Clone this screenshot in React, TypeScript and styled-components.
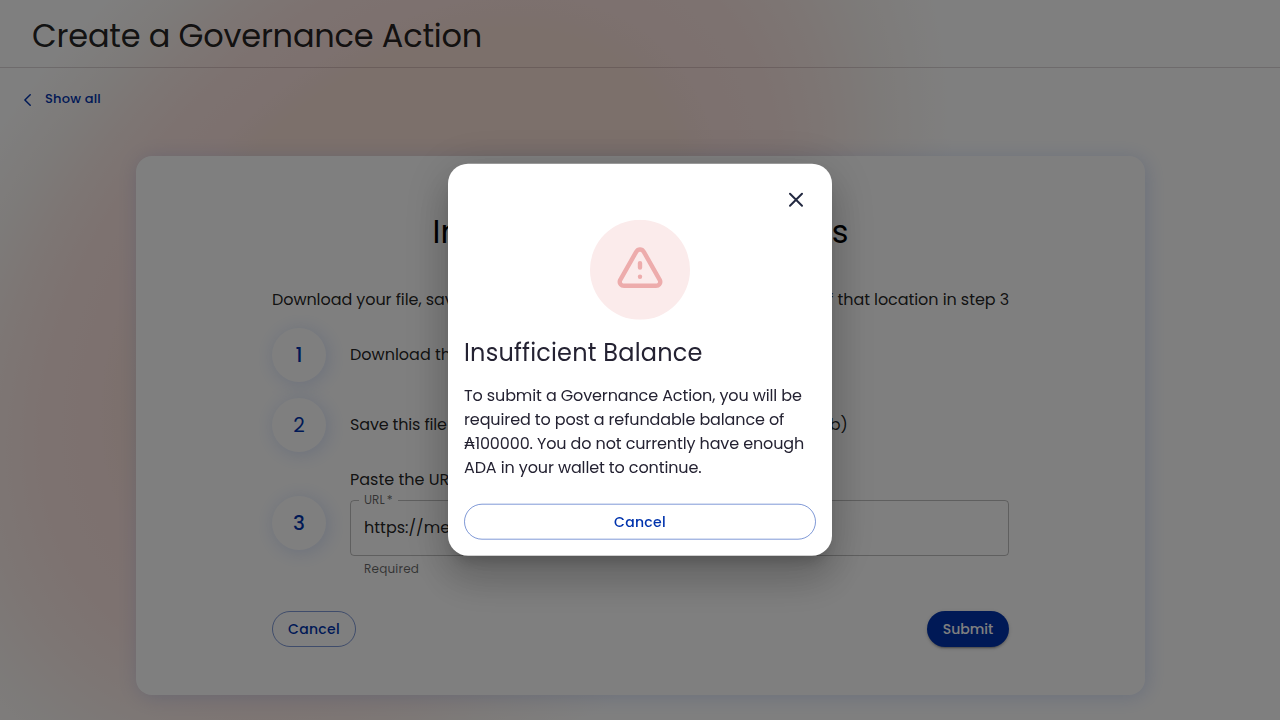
import React from "react";
import styled, { createGlobalStyle } from "styled-components";

const BLUE = "#0033ad";
const INK = "rgba(0, 0, 0, 0.87)";

const GlobalStyle = createGlobalStyle`
  * { box-sizing: border-box; }
  html, body { margin: 0; height: 100%; overflow: hidden; }
  body {
    font-family: Poppins, Inter, "Liberation Sans", sans-serif;
    font-size: 16px;
    line-height: 24px;
    color: ${INK};
  }
  #root { height: 100%; }
`;

const Page = styled.div`
  position: relative;
  isolation: isolate;
  height: 720px;
  overflow: hidden;
  background: #fff;
`;

const Glow = styled.div`
  position: absolute;
  z-index: -1;
  left: -225px;
  top: -130px;
  width: 1270px;
  height: 870px;
  transform: rotate(-45deg);
  background: radial-gradient(closest-side, #f8e0d6 0%, #f8e0d6 50%, #fae2de 57%, #fae5e1 68%, #faece8 77%, #fbf6f3 87%, #fff 100%);
`;

const Header = styled.header`
  display: flex;
  align-items: center;
  height: 68px;
  padding: 4px 32px 0;
  border-bottom: 1px solid rgba(60, 30, 40, 0.18);
`;

const PageTitle = styled.h1`
  margin: 0;
  font-size: 32px;
  font-weight: 400;
  line-height: 48px;
  letter-spacing: -0.2px;
  white-space: nowrap;
`;

const BackLink = styled.a`
  display: flex;
  align-items: center;
  gap: 13px;
  height: 20px;
  margin: 21px 0 0 24px;
  font-size: 13px;
  font-weight: 500;
  letter-spacing: 0.2px;
  color: ${BLUE};
  svg { display: block; margin-top: 2px; }
`;

const Card = styled.main`
  width: 1009px;
  height: 539px;
  margin: 47px 0 0 136px;
  padding: 52px 136px 48px;
  border-radius: 16px;
  background: #fff;
  box-shadow: 2px 2px 20px 0 rgba(47, 98, 220, 0.2);
`;

const CardTitle = styled.h2`
  margin: 0 0 32px;
  font-size: 32px;
  font-weight: 400;
  line-height: 48px;
  letter-spacing: -0.09px;
  text-align: center;
  white-space: nowrap;
  color: #000;
`;

const Intro = styled.p`
  margin: 0 0 16px;
  letter-spacing: -0.075px;
  text-align: center;
  white-space: nowrap;
`;

const Steps = styled.div`
  display: flex;
  flex-direction: column;
  gap: 16px;
`;

const Step = styled.div`
  display: flex;
  align-items: center;
  gap: 24px;
`;

const StepNumber = styled.div<{ $weight?: number }>`
  display: flex;
  align-items: center;
  justify-content: center;
  width: 54px;
  height: 54px;
  border-radius: 50%;
  font-size: 20px;
  font-weight: ${(p) => p.$weight ?? 500};
  color: ${BLUE};
  box-shadow: 2px 2px 20px 0 rgba(47, 98, 220, 0.2);
`;

const StepBody = styled.div`
  flex: 1;
`;

const StepText = styled.div<{ $tight?: boolean }>`
  letter-spacing: ${(p) => (p.$tight ? "-0.16px" : "0")};
  white-space: nowrap;
`;

const Field = styled.fieldset`
  height: 61px;
  margin: 3px 0 0;
  padding: 0 13px;
  border: 1px solid rgba(0, 0, 0, 0.25);
  border-radius: 4px;
`;

const FieldLabel = styled.legend`
  height: 10px;
  margin-left: -5px;
  padding: 0 5px;
  font-size: 12px;
  line-height: 10px;
  word-spacing: -1px;
  color: rgba(0, 0, 0, 0.6);
`;

const FieldValue = styled.div`
  padding-top: 11px;
`;

const Helper = styled.div`
  margin: 3px 14px 0;
  font-size: 12px;
  line-height: 19px;
  letter-spacing: 0.2px;
  color: rgba(0, 0, 0, 0.6);
`;

const Actions = styled.div`
  display: flex;
  justify-content: space-between;
  margin-top: 33px;
`;

const Button = styled.button<{ $filled?: boolean; $width: string }>`
  width: ${(p) => p.$width};
  height: 36px;
  padding: 0;
  border: ${(p) => (p.$filled ? "0" : "1px solid rgba(0, 51, 173, 0.5)")};
  border-radius: 18px;
  background: ${(p) => (p.$filled ? BLUE : "transparent")};
  box-shadow: ${(p) =>
    p.$filled
      ? "0 3px 1px -2px rgba(0,0,0,.2), 0 2px 2px rgba(0,0,0,.14), 0 1px 5px rgba(0,0,0,.12)"
      : "none"};
  font: inherit;
  font-size: 14px;
  font-weight: 500;
  letter-spacing: ${(p) => (p.$filled ? "0" : "0.3px")};
  color: ${(p) => (p.$filled ? "#fff" : BLUE)};
`;

const Backdrop = styled.div`
  position: fixed;
  inset: 0;
  display: flex;
  align-items: center;
  justify-content: center;
  background: rgba(0, 0, 0, 0.5);
`;

const Dialog = styled.section`
  display: flex;
  flex-direction: column;
  width: 384px;
  height: 392px;
  padding: 24px 16px 16px;
  border-radius: 20px;
  background: #fff;
  color: #242232;
  transform: translateY(-0.3px);
  box-shadow:
    0 11px 15px -7px rgba(0, 0, 0, 0.2),
    0 24px 38px 3px rgba(0, 0, 0, 0.14),
    0 9px 46px 8px rgba(0, 0, 0, 0.12);
`;

const CloseIcon = styled.svg`
  display: block;
  align-self: flex-end;
  margin-right: 8px;
`;

const WarningIcon = styled.svg`
  display: block;
  align-self: center;
  margin: 8px 0 17px;
`;

const DialogTitle = styled.h3`
  margin: 0 0 15px;
  font-size: 24px;
  font-weight: 400;
  line-height: 32px;
  letter-spacing: 0.2px;
  white-space: nowrap;
`;

const DialogText = styled.p`
  margin: 0 0 24px;
  letter-spacing: -0.12px;
`;

export default function App() {
  return (
    <>
      <GlobalStyle />
      <Page>
        <Glow />
        <Header>
          <PageTitle>Create a Governance Action</PageTitle>
        </Header>
        <BackLink>
          <svg width="8" height="12" viewBox="0 0 8 12" fill="none" stroke={BLUE} strokeWidth="1.5" strokeLinecap="round" strokeLinejoin="round">
            <path d="M6.200 .8 .9 6l5.300 5.200" />
          </svg>
          Show all
        </BackLink>
        <Card>
          <CardTitle>Information Storage Steps</CardTitle>
          <Intro>Download your file, save it to your chosen location, and enter the URL of that location in step 3</Intro>
          <Steps>
            <Step>
              <StepNumber>1</StepNumber>
              <StepText>Download this file</StepText>
            </Step>
            <Step>
              <StepNumber $weight={400}>2</StepNumber>
              <StepText $tight>Save this file in a location that provides a public URL (ex. github)</StepText>
            </Step>
            <Step>
              <StepNumber>3</StepNumber>
              <StepBody>
                <StepText>Paste the URL here</StepText>
                <Field>
                  <FieldLabel>URL *</FieldLabel>
                  <FieldValue>https://metadata.com</FieldValue>
                </Field>
                <Helper>Required</Helper>
              </StepBody>
            </Step>
          </Steps>
          <Actions>
            <Button $width="84px">Cancel</Button>
            <Button $width="82px" $filled>Submit</Button>
          </Actions>
        </Card>
      </Page>
      <Backdrop>
        <Dialog>
          <CloseIcon width="24" height="24" viewBox="0 0 24 24" fill="none" stroke="#242a42" strokeWidth="2" strokeLinecap="round">
            <path d="m6 6 12 12M18 6 6 18" />
          </CloseIcon>
          <WarningIcon width="100" height="100" viewBox="0 0 100 100" fill="none">
            <circle cx="50" cy="50" r="50" fill="#fbebeb" />
            <g transform="translate(0 .4)" stroke="#edacac" strokeWidth="4.400" strokeLinecap="round" strokeLinejoin="round">
              <path d="M46.200 31.700 30.300 59.700Q29 62.300 30.700 64.300 31.800 65.700 34 65.700H66Q68.200 65.700 69.300 64.300 71 62.300 69.700 59.700L53.800 31.700Q52.400 29.400 50 29.400T46.200 31.700Z" />
              <path d="M50 43v4.500M50 56.500v.1" />
            </g>
          </WarningIcon>
          <DialogTitle>Insufficient Balance</DialogTitle>
          <DialogText>
            To submit a Governance Action, you will be required to post a refundable balance of ₳100000. You do not
            currently have enough ADA in your wallet to continue.
          </DialogText>
          <Button $width="100%">Cancel</Button>
        </Dialog>
      </Backdrop>
    </>
  );
}
